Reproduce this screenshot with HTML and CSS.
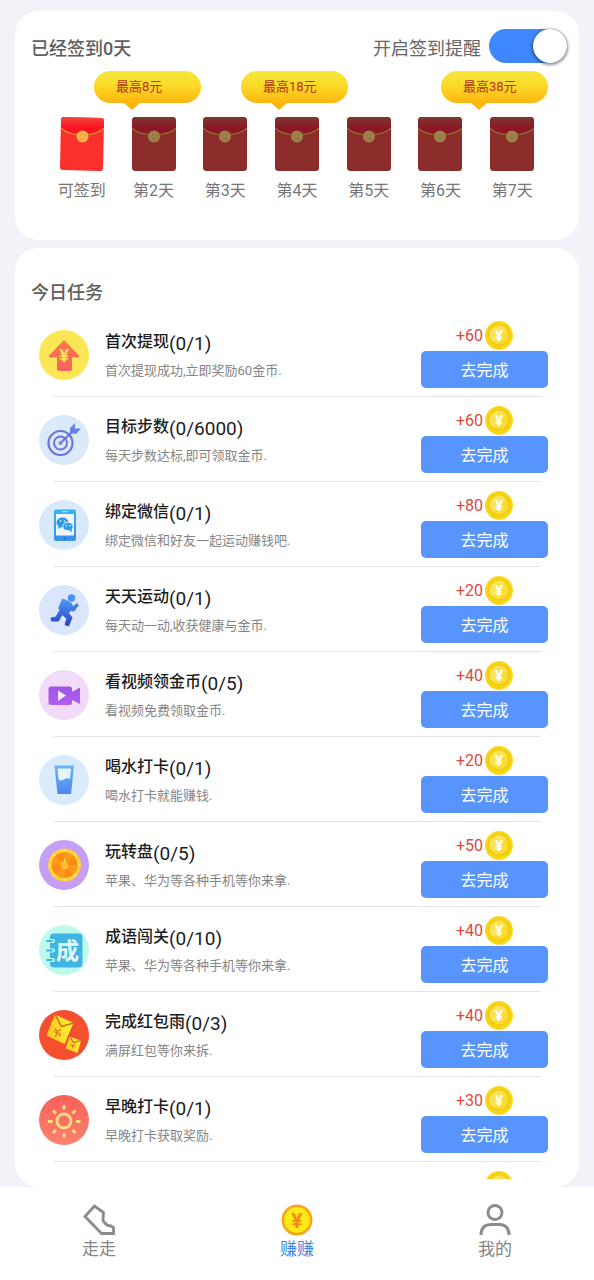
FILE: index.html
```html
<!DOCTYPE html>
<html lang="zh-CN">
<head>
<meta charset="utf-8">
<meta name="viewport" content="width=device-width, initial-scale=1">
<title>赚赚</title>
<link rel="stylesheet" href="styles.css">
</head>
<body>
<svg class="defs" aria-hidden="true">
  <defs>
    <linearGradient id="flapOn" x1="0" y1="0" x2="0" y2="1"><stop offset="0" stop-color="#f04a3c"/><stop offset=".6" stop-color="#fb1224"/></linearGradient>
    <linearGradient id="flapOff" x1="0" y1="0" x2="0" y2="1"><stop offset="0" stop-color="#7c3a2c"/><stop offset=".6" stop-color="#8c1626"/></linearGradient>
    <linearGradient id="blueDown" x1="0" y1="0" x2="0" y2="1"><stop offset="0" stop-color="#4e9bf5"/><stop offset="1" stop-color="#2d3fc4"/></linearGradient>
    <linearGradient id="water" x1="0" y1="0" x2="0" y2="1"><stop offset="0" stop-color="#69b7f8"/><stop offset="1" stop-color="#4a86ee"/></linearGradient>
    <linearGradient id="violet" x1="0" y1="0" x2="0" y2="1"><stop offset="0" stop-color="#9d55e6"/><stop offset="1" stop-color="#b35ff2"/></linearGradient>
    <linearGradient id="phone" x1="0" y1="0" x2="0" y2="1"><stop offset="0" stop-color="#35b3f2"/><stop offset="1" stop-color="#3c8fe8"/></linearGradient>
    <linearGradient id="arrow" x1="0" y1="0" x2="0" y2="1"><stop offset="0" stop-color="#fa7a4e"/><stop offset="1" stop-color="#f8635f"/></linearGradient>
    <linearGradient id="sunrise" x1="0" y1="0" x2="0" y2="1"><stop offset="0" stop-color="#f8605a"/><stop offset="1" stop-color="#fa8270"/></linearGradient>
    <linearGradient id="packet" x1="0" y1="0" x2="1" y2="0"><stop offset="0" stop-color="#fdc918"/><stop offset="1" stop-color="#fdf03a"/></linearGradient>
    <symbol id="env-on" viewBox="0 0 44 54">
      <path d="M4 0 41 1Q44 1 44 4L43 51Q43 54 40 54L3 53Q0 53 0 50L1 3Q1 0 4 0Z" fill="#f9302c"/>
      <path d="M4 0 41 1Q44 1 44 4V11C36 20 9 20 1 11V3Q1 0 4 0Z" fill="url(#flapOn)"/>
      <path d="M1 11C9 20 36 20 44 11" fill="none" stroke="#e58a22" stroke-width="1.2"/>
      <circle cx="22.500" cy="19.500" r="6" fill="#f7b24c"/><path d="M20 18.500h1M24 18.500h1M20 21.500q2.500 2 5 0" stroke="#eb9d35" fill="none"/>
    </symbol>
    <symbol id="env-off" viewBox="0 0 44 54">
      <rect y="0" width="44" height="54" rx="3.500" fill="#8b2c2a"/>
      <path d="M4 0H40Q44 0 44 4V11C36 20 8 20 0 11V4Q0 0 4 0Z" fill="url(#flapOff)"/>
      <path d="M0 11C8 20 36 20 44 11" fill="none" stroke="#8e6a2c" stroke-width="1.200"/>
      <circle cx="22" cy="19.500" r="6" fill="#a1804c"/><path d="M20 18h1M23.500 18h1M19.500 21q2.500 2 5 0" stroke="#846b35" fill="none"/>
    </symbol>
    <symbol id="coin" viewBox="0 0 28 29">
      <ellipse cx="14" cy="14.500" rx="14" ry="14.500" fill="#f8dc3c"/>
      <ellipse cx="14" cy="14.200" rx="13.200" ry="13.500" fill="#f5d50f"/>
      <circle cx="14" cy="14" r="10" fill="#fbdb35" stroke="#f3c40e" stroke-width="1.200"/>
      <path d="M5 18A10 10 0 0 1 18 5L21 8 8 21Z" fill="#fdea79" opacity=".5"/>
      <text x="14" y="19.500" text-anchor="middle" class="yen yen-white">¥</text>
    </symbol>
  </defs>
</svg>

<main class="page">
  <section class="card sign">
    <header class="sign-head">
      <h2 class="heading">已经签到0天</h2>
      <label class="remind" for="remind">开启签到提醒</label>
      <input class="switch" type="checkbox" role="switch" id="remind" checked>
    </header>
    <div class="badges">
      <span class="badge">最高8元</span>
      <span class="badge">最高18元</span>
      <span class="badge badge-last">最高38元</span>
    </div>
    <ol class="days">
      <li class="day"><svg class="env" aria-hidden="true"><use href="#env-on"/></svg>可签到</li>
      <li class="day"><svg class="env" aria-hidden="true"><use href="#env-off"/></svg>第2天</li>
      <li class="day"><svg class="env" aria-hidden="true"><use href="#env-off"/></svg>第3天</li>
      <li class="day"><svg class="env" aria-hidden="true"><use href="#env-off"/></svg>第4天</li>
      <li class="day"><svg class="env" aria-hidden="true"><use href="#env-off"/></svg>第5天</li>
      <li class="day"><svg class="env" aria-hidden="true"><use href="#env-off"/></svg>第6天</li>
      <li class="day"><svg class="env" aria-hidden="true"><use href="#env-off"/></svg>第7天</li>
    </ol>
  </section>

  <section class="card tasks">
    <h2 class="heading tasks-title">今日任务</h2>
    <ul class="list">
      <li class="task">
        <svg class="icon" viewBox="0 0 50 50" aria-hidden="true"><circle cx="25" cy="25" r="25" fill="#fbe755"/><path d="M25 10 40 25.500Q41 27.500 38 27.500H33V39Q33 41 31 41H20Q18 41 18 39V27.500H12Q9 27.500 10 25.500Z" fill="url(#arrow)"/><text x="25" y="32" text-anchor="middle" class="yen yen-arrow">¥</text></svg>
        <div class="info"><h3 class="name">首次提现<span class="count">(0/1)</span></h3><p class="desc">首次提现成功,立即奖励60金币.</p></div>
        <div class="action"><span class="reward">+60<svg class="coin" aria-hidden="true"><use href="#coin"/></svg></span><button class="go" type="button">去完成</button></div>
      </li>
      <li class="task">
        <svg class="icon" viewBox="0 0 50 50" aria-hidden="true"><circle cx="25" cy="25" r="25" fill="#dbeafb"/><g fill="none" stroke="#6a74dc"><circle cx="21.500" cy="28" r="12" stroke-width="2.200"/><circle cx="21.500" cy="28" r="6.500" stroke-width="2"/><path d="M21 28.500 34 16" stroke-width="2"/></g><circle cx="21.500" cy="28" r="2" fill="#7d86e2"/><path d="M31 18V13L36 8V13.500H42L37 19Z" fill="#6b83e6"/></svg>
        <div class="info"><h3 class="name">目标步数<span class="count">(0/6000)</span></h3><p class="desc">每天步数达标,即可领取金币.</p></div>
        <div class="action"><span class="reward">+60<svg class="coin" aria-hidden="true"><use href="#coin"/></svg></span><button class="go" type="button">去完成</button></div>
      </li>
      <li class="task">
        <svg class="icon" viewBox="0 0 50 50" aria-hidden="true"><circle cx="25" cy="25" r="25" fill="#d9e9fc"/><rect x="15" y="9.500" width="22" height="31.500" rx="2" fill="url(#phone)"/><rect x="17" y="14" width="18" height="21.500" fill="#eef7fe"/><path d="M23 11.700h6" stroke="#c6e7fb" stroke-width="1"/><circle cx="26" cy="38.300" r="1.300" fill="#2572c4"/><ellipse cx="23.500" cy="22.500" rx="6" ry="5" fill="#3097e4"/><path d="M19.500 26 19 29l3.500-2Z" fill="#3097e4"/><ellipse cx="29" cy="26.500" rx="5.200" ry="4.300" fill="#2e9fe8" stroke="#eef7fe"/><path d="M30 30.500 33 32 32.500 28.500Z" fill="#2e9fe8"/><g fill="#fff"><circle cx="21.500" cy="21" r=".8"/><circle cx="25.500" cy="21" r=".8"/><circle cx="27.500" cy="25.500" r=".7"/><circle cx="31" cy="25.500" r=".7"/></g></svg>
        <div class="info"><h3 class="name">绑定微信<span class="count">(0/1)</span></h3><p class="desc">绑定微信和好友一起运动赚钱吧.</p></div>
        <div class="action"><span class="reward">+80<svg class="coin" aria-hidden="true"><use href="#coin"/></svg></span><button class="go" type="button">去完成</button></div>
      </li>
      <li class="task">
        <svg class="icon" viewBox="0 0 50 50" aria-hidden="true"><circle cx="25" cy="25" r="25" fill="#d9e6fb"/><circle cx="32.500" cy="13" r="3.700" fill="#4d92ee"/><path d="M23.500 14 29.500 16.500 32.500 18.500 34 22 37.500 18.500 39.500 20 35 26 31.500 25.500 29.500 28 33 32.500 29.500 41 26 39.500 28 33.500 23 29.500 19.500 36 12.500 36 12 33 17 32 21.500 24 24 18.500 24 17.500 22 24.500 19.500 23.500Z" fill="url(#blueDown)" stroke="url(#blueDown)" stroke-linejoin="round"/></svg>
        <div class="info"><h3 class="name">天天运动<span class="count">(0/1)</span></h3><p class="desc">每天动一动,收获健康与金币.</p></div>
        <div class="action"><span class="reward">+20<svg class="coin" aria-hidden="true"><use href="#coin"/></svg></span><button class="go" type="button">去完成</button></div>
      </li>
      <li class="task">
        <svg class="icon" viewBox="0 0 50 50" aria-hidden="true"><circle cx="25" cy="25" r="25" fill="#f2dafa"/><path d="M12 16.500H30.500Q33 16.500 33 19V22L41 17.500V34L33 30V32.500Q33 35 30.500 35H12Q9.500 35 9.500 32.500V19Q9.500 16.500 12 16.500Z" fill="url(#violet)"/><path d="M19 20.500 27 25.500 19 31Z" fill="#faeaff"/></svg>
        <div class="info"><h3 class="name">看视频领金币<span class="count">(0/5)</span></h3><p class="desc">看视频免费领取金币.</p></div>
        <div class="action"><span class="reward">+40<svg class="coin" aria-hidden="true"><use href="#coin"/></svg></span><button class="go" type="button">去完成</button></div>
      </li>
      <li class="task">
        <svg class="icon" viewBox="0 0 50 50" aria-hidden="true"><circle cx="25" cy="25" r="25" fill="#d9ebfc"/><path d="M15.500 10.500H35L32 39H18.500Z" fill="url(#water)"/><path d="M18.500 13.500H32L31 24Q28 22.500 25 24.500T19.500 24.500Z" fill="#e7f4fe"/></svg>
        <div class="info"><h3 class="name">喝水打卡<span class="count">(0/1)</span></h3><p class="desc">喝水打卡就能赚钱.</p></div>
        <div class="action"><span class="reward">+20<svg class="coin" aria-hidden="true"><use href="#coin"/></svg></span><button class="go" type="button">去完成</button></div>
      </li>
      <li class="task">
        <svg class="icon" viewBox="0 0 50 50" aria-hidden="true"><circle cx="25" cy="25" r="25" fill="#c79ef6"/><circle cx="25.500" cy="25" r="16.500" fill="#fbd03a"/><circle cx="25.500" cy="25" r="12.800" fill="#fb8a12"/><path d="M25.500 25V12.200A12.800 12.800 0 0 1 34.500 16ZM25.500 25H38.300A12.800 12.800 0 0 1 34.500 34ZM25.500 25V37.800A12.800 12.800 0 0 1 16.500 34ZM25.500 25H12.700A12.800 12.800 0 0 1 16.500 16Z" fill="#fc9a1a"/><path d="M24 24 25.500 17 27 24Z" fill="#ffe253"/><circle cx="25.500" cy="25.500" r="3.700" fill="#fdbf2c"/><g fill="#fff0a0"><circle cx="25.500" cy="10.300" r=".9"/><circle cx="36" cy="14.500" r=".9"/><circle cx="40.200" cy="25" r=".9"/><circle cx="36" cy="35.500" r=".9"/><circle cx="25.500" cy="39.700" r=".9"/><circle cx="15" cy="35.500" r=".9"/><circle cx="10.800" cy="25" r=".9"/><circle cx="15" cy="14.500" r=".9"/></g></svg>
        <div class="info"><h3 class="name">玩转盘<span class="count">(0/5)</span></h3><p class="desc">苹果、华为等各种手机等你来拿.</p></div>
        <div class="action"><span class="reward">+50<svg class="coin" aria-hidden="true"><use href="#coin"/></svg></span><button class="go" type="button">去完成</button></div>
      </li>
      <li class="task">
        <svg class="icon" viewBox="0 0 50 50" aria-hidden="true"><circle cx="25" cy="25" r="25" fill="#bdf9ec"/><rect x="11" y="8.500" width="32.500" height="34" rx="4" fill="#40b4e2"/><g stroke="#bdf9ec" stroke-width="4" stroke-linecap="round"><path d="M10 16h4M10 25.500h4M10 35h4"/></g><g stroke="#40b4e2" stroke-width="2" stroke-linecap="round"><path d="M8 16h5M8 25.500h5M8 35h5"/></g><text x="28.500" y="34" text-anchor="middle" class="idiom">成</text></svg>
        <div class="info"><h3 class="name">成语闯关<span class="count">(0/10)</span></h3><p class="desc">苹果、华为等各种手机等你来拿.</p></div>
        <div class="action"><span class="reward">+40<svg class="coin" aria-hidden="true"><use href="#coin"/></svg></span><button class="go" type="button">去完成</button></div>
      </li>
      <li class="task">
        <svg class="icon" viewBox="0 0 50 50" aria-hidden="true"><circle cx="25" cy="25" r="25" fill="#f4502f"/><path d="M16 4.500 34.500 13 25.500 34 7.500 25.500Z" fill="url(#packet)"/><path d="M16 4.500 22.500 16.500 34.500 13" fill="none" stroke="#c9741c" stroke-width="1.500"/><path d="M14.500 21.500 22 24M15.500 18.500 18 21 22 20M18.500 21.500 16.500 27M20 23 21 26.500" fill="none" stroke="#dc7a1c" stroke-width="1.300"/><path d="M30.500 26.500 42 30.500 38.500 43 26.500 38.500Z" fill="url(#packet)"/><path d="M30.500 26.500 34.500 32.500 42 30.500" fill="none" stroke="#c9741c" stroke-width="1.200"/><path d="M31.500 35 36 36.500M32.500 33.500 34 35.500 36.500 34.500M34 35.500 33 38.500" fill="none" stroke="#dc7a1c"/></svg>
        <div class="info"><h3 class="name">完成红包雨<span class="count">(0/3)</span></h3><p class="desc">满屏红包等你来拆.</p></div>
        <div class="action"><span class="reward">+40<svg class="coin" aria-hidden="true"><use href="#coin"/></svg></span><button class="go" type="button">去完成</button></div>
      </li>
      <li class="task">
        <svg class="icon" viewBox="0 0 50 50" aria-hidden="true"><circle cx="25" cy="25" r="25" fill="url(#sunrise)"/><g fill="none" stroke="#fdde7c" stroke-width="2.800"><circle cx="25" cy="26" r="7"/><path d="M25 10v4.500M25 38v4.500M9 26.500h4.500M37 26.500h4.500M14 15.500l3 3M33.500 35l3 3M36.500 15.500l-3 3M17 35l-3 3"/></g></svg>
        <div class="info"><h3 class="name">早晚打卡<span class="count">(0/1)</span></h3><p class="desc">早晚打卡获取奖励.</p></div>
        <div class="action"><span class="reward">+30<svg class="coin" aria-hidden="true"><use href="#coin"/></svg></span><button class="go" type="button">去完成</button></div>
      </li>
      <li class="task">
        <div class="action"><span class="reward"><svg class="coin coin-end" aria-hidden="true"><use href="#coin"/></svg></span></div>
      </li>
    </ul>
  </section>
</main>

<nav class="tabs">
  <a class="tab" href="#walk"><svg class="tab-icon" viewBox="0 0 32 32" aria-hidden="true"><path d="M11.500 2 2 12.500 18.500 29.500H30.500V23.500Q28 21.500 25 21.500 22 20 20 16.500L20.500 8.500Z" fill="none" stroke="#8b8b8b" stroke-width="2.800"/></svg>走走</a>
  <a class="tab tab-active" href="#earn" aria-current="page"><svg class="tab-icon" viewBox="0 0 32 32" aria-hidden="true"><circle cx="16" cy="16" r="14.200" fill="#fde915" stroke="#f8a51c" stroke-width="2.600"/><text x="16" y="23.500" text-anchor="middle" class="yen yen-tab">¥</text></svg>赚赚</a>
  <a class="tab" href="#me"><svg class="tab-icon" viewBox="0 0 32 32" aria-hidden="true"><g fill="none" stroke="#8b8b8b" stroke-width="3"><circle cx="16" cy="8.500" r="7"/><path d="M2 31V29.500Q3 20.500 11.500 20.500H20.500Q29 20.500 30 29.500V31"/></g></svg>我的</a>
</nav>
</body>
</html>
```

FILE: styles.css
```css
* {
  box-sizing: border-box;
}

body {
  display: flex;
  flex-direction: column;
  height: 100vh;
  margin: 0;
  background: #f1f3f8;
  color: #666;
  font-family: Roboto, "Noto Sans CJK SC", sans-serif;
}

h2,
h3,
p,
ol,
ul {
  margin: 0;
  padding: 0;
}

ol,
ul {
  list-style: none;
}

.defs {
  position: absolute;
  width: 0;
  height: 0;
}

.page {
  display: flex;
  flex: 1;
  flex-direction: column;
  gap: 8px;
  min-height: 0;
  padding: 11px 15px 0;
}

.card {
  border-radius: 24px;
  background: #fff;
}

.heading {
  color: #5e5e5e;
  font-size: 18px;
  font-weight: 500;
  line-height: 24px;
}

/* Sign-in card */
.sign {
  padding: 18px 0 39px;
}

.sign-head {
  display: flex;
  align-items: flex-end;
  gap: 8px;
  height: 36px;
  padding: 0 12px 0 16px;
}

.sign-head .heading,
.remind {
  padding-bottom: 4px;
}

.remind {
  margin-left: auto;
  font-size: 18px;
  line-height: 24px;
}

.switch {
  align-self: flex-start;
  width: 78px;
  height: 34px;
  margin: 0;
  border-radius: 17px;
  background: #c8c8c8;
  appearance: none;
}

.switch::before {
  display: block;
  width: 34px;
  height: 34px;
  border-radius: 50%;
  background: #fff;
  box-shadow: 0 1px 3px 1px rgba(0, 0, 0, .45);
  content: "";
}

.switch:checked {
  background: #3f87fd;
}

.switch:checked::before {
  margin-left: auto;
}

.badges {
  display: flex;
  gap: 40px;
  padding: 6px 31px 0 79px;
}

.badge {
  position: relative;
  width: 107px;
  padding-left: 22px;
  border-radius: 16px;
  background: linear-gradient(#f6e83c, #fbd726 50%, #fdb50f);
  color: #b5311b;
  font-size: 13px;
  line-height: 32px;
}

.badge::after {
  position: absolute;
  top: 100%;
  left: 30px;
  border: 8px solid transparent;
  border-top: 7px solid #fdb40e;
  border-bottom: 0;
  content: "";
}

.badge-last {
  margin-left: auto;
}

.days {
  display: grid;
  grid-template-columns: repeat(7, 1fr);
  padding: 14px 31px 0;
}

.day {
  display: flex;
  flex-direction: column;
  align-items: center;
  gap: 10px;
  color: #757575;
  font-size: 16px;
  line-height: 20px;
}

.env {
  width: 44px;
  height: 54px;
}

/* Task list */
.tasks {
  display: flex;
  flex: 1;
  flex-direction: column;
  min-height: 0;
  padding: 33px 0 8px;
}

.tasks-title {
  padding-left: 16px;
}

.list {
  flex: 1;
  min-height: 0;
  margin-top: 7px;
  overflow: hidden;
}

.task {
  display: flex;
  align-items: center;
  height: 85px;
  padding: 0 31px 0 24px;
  background: linear-gradient(#e3e3e6, #e3e3e6) 39px 100% / calc(100% - 78px) 1px no-repeat;
}

.icon {
  flex: none;
  width: 50px;
  height: 50px;
}

.info {
  display: grid;
  flex: 1;
  gap: 5px;
  padding-left: 16px;
}

.name {
  display: flex;
  align-items: center;
  color: #1c1c1c;
  font-size: 16px;
  font-weight: 500;
  line-height: 24px;
}

.count {
  padding-top: 3px;
  font-size: 19px;
  font-weight: 400;
}

.desc {
  color: #858585;
  font-size: 13px;
  line-height: 20px;
}

.action {
  display: grid;
  gap: 1px;
  width: 127px;
  margin-left: auto;
}

.reward {
  display: flex;
  align-items: center;
  justify-content: center;
  gap: 2px;
  color: #d94a3c;
  font-size: 16px;
  line-height: 29px;
}

.coin {
  width: 28px;
  height: 29px;
}

.coin-end {
  margin: 0 0 38px 29px;
}

.go {
  height: 37px;
  padding: 0 0 2px;
  border: 0;
  border-radius: 5px;
  background: #5795fd;
  color: #fff;
  font-family: inherit;
  font-size: 16px;
}

.yen {
  font-family: Roboto, sans-serif;
  font-weight: 700;
}

.yen-white {
  fill: #fff;
  font-size: 15px;
}

.yen-arrow {
  fill: #fbe755;
  font-size: 18px;
}

.yen-tab {
  fill: #f58a1c;
  font-size: 21px;
}

.idiom {
  fill: #e4fbfc;
  font-family: "Noto Sans CJK SC", sans-serif;
  font-size: 23px;
  font-weight: 700;
}

/* Bottom tabs */
.tabs {
  display: grid;
  grid-template-columns: repeat(3, 1fr);
  height: 93px;
  padding-top: 17px;
  background: #fff;
}

.tab {
  display: flex;
  flex-direction: column;
  align-items: center;
  gap: 1px;
  color: #858585;
  font-size: 17px;
  line-height: 24px;
  text-decoration: none;
}

.tab-icon {
  width: 32px;
  height: 32px;
}

.tab-active {
  color: #3f87e8;
}
```
